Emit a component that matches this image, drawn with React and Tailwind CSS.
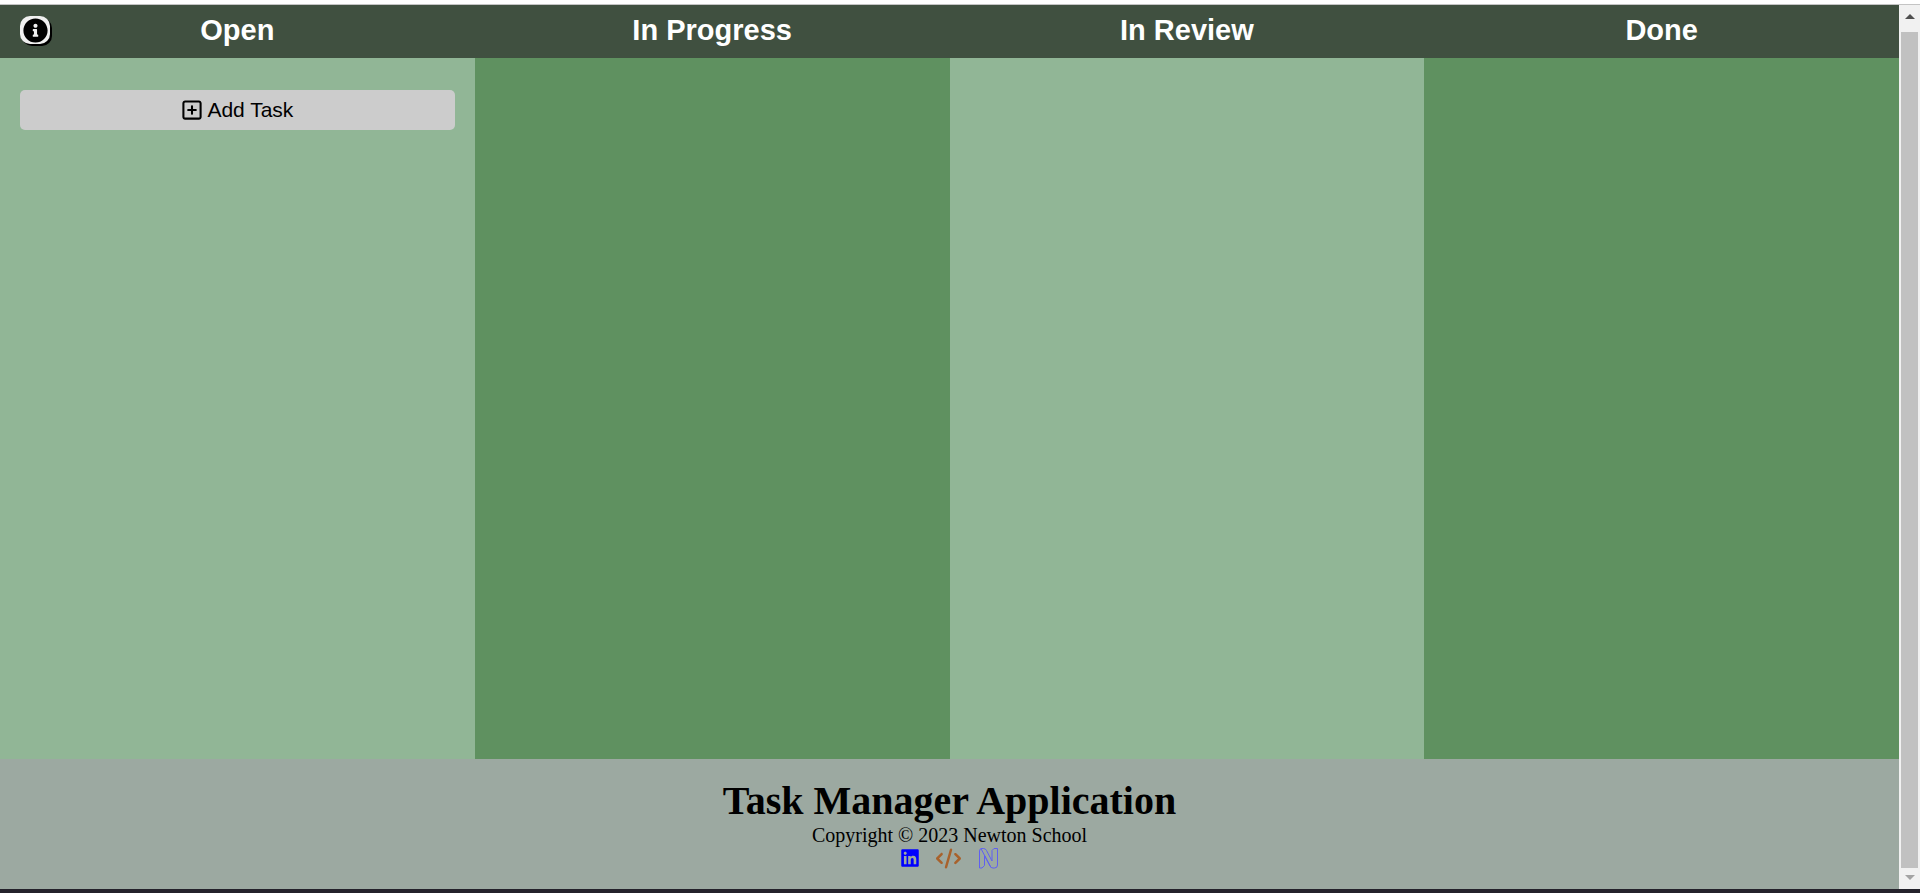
import React from "react";
import { FaRegSquarePlus, FaLinkedin, FaCode } from "react-icons/fa6";
import { FaInfoCircle } from "react-icons/fa";

const columns = [
  { title: "Open", tone: "bg-[#91b696]" },
  { title: "In Progress", tone: "bg-[#5f9160]" },
  { title: "In Review", tone: "bg-[#91b696]" },
  { title: "Done", tone: "bg-[#5f9160]" },
];

function NewtonLogo() {
  return (
    <svg viewBox="0 0 22 22" className="size-[22px]" fill="none" stroke="#5f5ff2" strokeWidth="1" strokeLinejoin="round" aria-hidden="true">
      <path d="M2.5 4 Q2.5 1.5 5 1.5 H6.5 Q8.5 1.5 9.5 3.5 L15 14 V3.5 L17 1.5 H20.5 V18 Q20.5 21 17.5 21 H16 Q14 21 13 19 L7.5 8.5 V18.5 L5 21 H2.5 Z" />
      <path d="M4 1.7 L14 20.5" />
    </svg>
  );
}

function Scrollbar() {
  return (
    <div className="flex w-[21px] shrink-0 flex-col items-center bg-[#f1f1f1]" aria-hidden="true">
      <div className="flex h-[27px] items-center">
        <svg viewBox="0 0 10 5" className="mb-1 h-[5px] w-[10px]"><path d="M0 5 L5 0 L10 5Z" fill="#505050" /></svg>
      </div>
      <div className="w-[17px] grow bg-[#c1c1c1]" />
      <div className="flex h-[21px] items-center">
        <svg viewBox="0 0 10 5" className="mb-[2px] h-[5px] w-[10px]"><path d="M0 0 L5 5 L10 0Z" fill="#a3a3a3" /></svg>
      </div>
    </div>
  );
}

export default function App() {
  return (
    <div className="flex h-screen flex-col border-b-4 border-[#24222b] bg-white pt-1">
      <div className="flex grow border-t border-[#c4c4c4]">
        <div className="flex min-w-0 grow flex-col">
          <main className="relative grid grow grid-cols-4">
            <button type="button" aria-label="Information" className="absolute left-5 top-[11px] flex h-7 w-[30px] items-center justify-center rounded-[10px] bg-[#f0f0f0] text-black shadow-[2px_2px_0_#000]">
              <FaInfoCircle className="size-[25px]" />
            </button>
            {columns.map(({ title, tone }, i) => (
              <section key={title} className={`flex flex-col ${tone}`}>
                <h2 className="flex h-[53px] items-center justify-center bg-[#405040] pb-px font-['Liberation_Sans',Arial,sans-serif] text-[29px] font-bold text-white">{title}</h2>
                {i === 0 && (
                  <button type="button" className="mx-5 mt-8 flex h-10 items-center justify-center gap-1 rounded-[5px] bg-[#ccc] pb-px font-['Liberation_Sans',Arial,sans-serif] text-[21px] text-black">
                    <FaRegSquarePlus className="size-[22px]" />
                    Add Task
                  </button>
                )}
              </section>
            ))}
          </main>
          <footer className="flex h-[130px] flex-col items-center bg-[#9ca9a1] pt-[19px] font-['Liberation_Serif','Times_New_Roman',serif] text-black">
            <h1 className="text-[40px] leading-[46px] font-bold">Task Manager Application</h1>
            <p className="text-xl leading-[23px]">Copyright © 2023 Newton School</p>
            <nav className="flex h-[22px] items-center gap-4">
              <a href="#linkedin" aria-label="LinkedIn" className="text-[#0000ff]"><FaLinkedin className="size-5" /></a>
              <a href="#code" aria-label="Source code" className="text-[#a8622c]"><FaCode className="size-[25px]" /></a>
              <a href="#newton" aria-label="Newton School"><NewtonLogo /></a>
            </nav>
          </footer>
        </div>
        <Scrollbar />
      </div>
    </div>
  );
}
